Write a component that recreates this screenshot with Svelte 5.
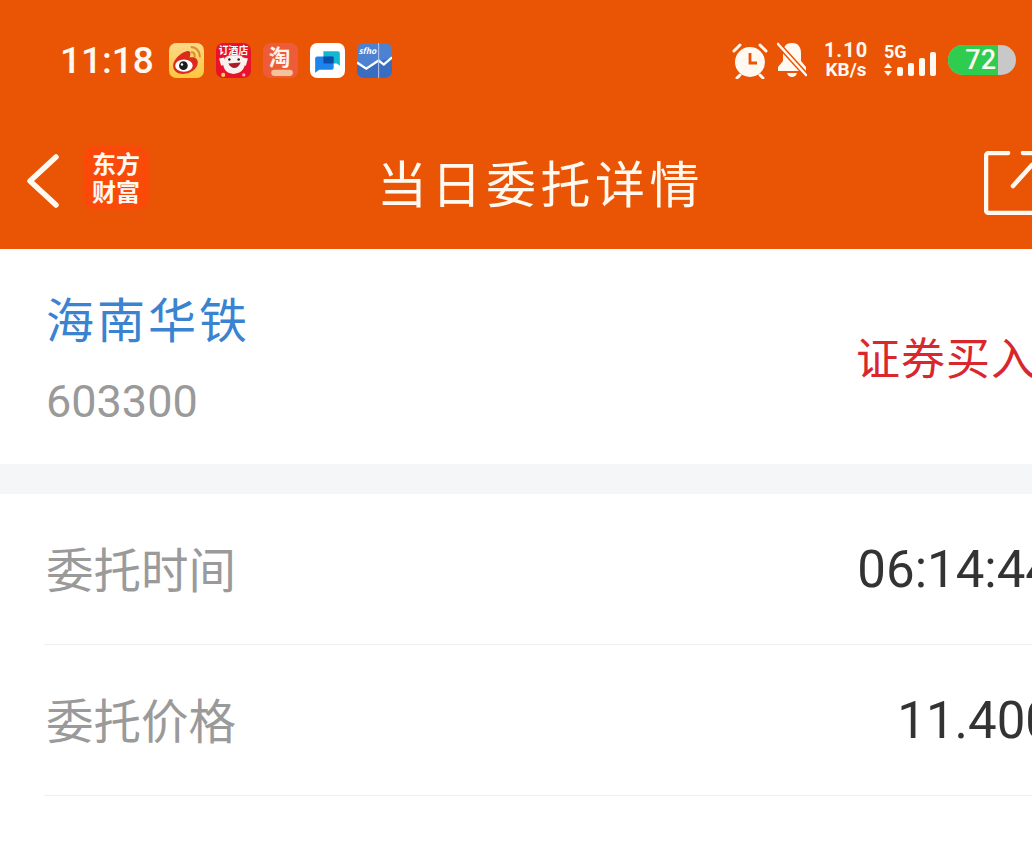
<script lang="ts">
  const rows = [
    { label: '委托时间', value: '06:14:44' },
    { label: '委托价格', value: '11.400' }
  ];
</script>

<div class="page">
  <header class="top">
    <div class="status">
      <div class="status-left">
        <span class="time">11:18</span>
        <div class="apps">
          <svg class="app" viewBox="0 0 34 34">
            <defs>
              <linearGradient id="wb" x1="0" y1="0" x2="0" y2="1">
                <stop offset="0" stop-color="#fbd98a" />
                <stop offset="1" stop-color="#fdc83a" />
              </linearGradient>
            </defs>
            <rect width="34" height="34" rx="7" fill="url(#wb)" />
            <path d="M4 22c0-6 8-13 13-14 3-1 5 1 3 6 5-1 8 1 8 5 0 6-7 11-14 11-6 0-10-3-10-8z" fill="#dc2a1f" />
            <ellipse cx="14.5" cy="22" rx="8.5" ry="6" fill="#fff" />
            <circle cx="14" cy="22" r="4.2" fill="#1c1c1c" />
            <circle cx="12.6" cy="20.8" r="1.2" fill="#fff" />
            <path d="M22 4c4 0 8 4 8 9M22 9c2 0 3 2 3 4" fill="none" stroke="#d98f2a" stroke-width="2" stroke-linecap="round" />
          </svg>
          <svg class="app" viewBox="0 0 34 34">
            <rect width="34" height="34" rx="7" fill="#e9122d" />
            <text x="17" y="11" class="mini-text" font-size="9.5" fill="#fff">订酒店</text>
            <path d="M7 20c0-4 3-8 7-8h8c4 0 6 4 6 8 0 6-5 10-11 10S7 26 7 20z" fill="#fdf1ee" />
            <path d="M3 15l5-1 1 7-4 1zM31 15l-5-1-1 7 4 1z" fill="#fdf1ee" />
            <path d="M12 20c3 6 9 6 12-1z" fill="#a91c30" />
            <circle cx="13" cy="16" r="1.2" fill="#222" />
            <circle cx="22" cy="16" r="1.2" fill="#222" />
            <circle cx="7" cy="31" r="2" fill="#fbd34d" />
            <circle cx="27" cy="31" r="1.6" fill="#f9a8b4" />
          </svg>
          <svg class="app" viewBox="0 0 34 34">
            <rect width="34" height="34" rx="7" fill="#ee5b38" />
            <text x="16" y="21" class="mini-text" font-size="21" fill="#fff2e8">淘</text>
            <rect x="8" y="26" width="21" height="6" rx="3" fill="#f4c39a" />
          </svg>
          <svg class="app" viewBox="0 0 34 34">
            <rect width="34" height="34" rx="7" fill="#fff" />
            <path d="M13 8h14a2 2 0 0 1 2 2v12l-3-2h-13z" fill="#12b8cf" />
            <path d="M7 13h14a2 2 0 0 1 2 2v9a2 2 0 0 1-2 2H9l-4 3V15a2 2 0 0 1 2-2z" fill="#1c84ec" />
            <rect x="13" y="13" width="10" height="7" rx="1" fill="#0d4fa8" />
          </svg>
          <svg class="app" viewBox="0 0 34 34">
            <rect width="34" height="34" rx="7" fill="#4d82d2" />
            <path d="M0 19l9 7 12-9 13-2v12a7 7 0 0 1-7 7H7a7 7 0 0 1-7-7z" fill="#3a6cc0" />
            <path d="M0 19l9 6 12-8 5 4 8-7" fill="none" stroke="#fff" stroke-width="2.2" />
            <path d="M21 0v34" stroke="#b3c9ea" stroke-width="1" />
            <text x="10" y="11" class="mini-text" font-size="8" font-style="italic" fill="#fff">sfho</text>
          </svg>
        </div>
      </div>
      <div class="status-right">
        <svg class="alarm" viewBox="0 0 36 37">
          <circle cx="18" cy="20" r="15" fill="#fff9f2" />
          <path d="M18 11v10h7" fill="none" stroke="#e95504" stroke-width="2.8" />
          <path d="M2 9l6-6M34 9l-6-6M8 33l-3 3M28 33l3 3" stroke="#fff9f2" stroke-width="3" stroke-linecap="round" />
        </svg>
        <svg class="bell" viewBox="0 0 30 36">
          <path d="M15 1C8 1 6 6 6 11v8l-5 6v4h28v-4l-5-6v-8c0-5-2-10-9-10z" fill="#fff9f2" />
          <path d="M10 31c1 3 3 4 5 4s4-1 5-4z" fill="#fff9f2" />
          <path d="M0 1l30 33" stroke="#e95504" stroke-width="5.5" />
          <path d="M1 2l28 31" stroke="#fff9f2" stroke-width="2.6" stroke-linecap="round" />
        </svg>
        <div class="speed">
          <span class="speed-num">1.10</span>
          <span class="speed-unit">KB/s</span>
        </div>
        <div class="signal">
          <span class="net">5G</span>
          <div class="bars">
            <svg class="arrows" viewBox="0 0 8 13">
              <path d="M4 0l4 5H0zM4 13l4-5H0z" fill="#fff9f2" />
            </svg>
            <i class="bar b1"></i>
            <i class="bar b2"></i>
            <i class="bar b3"></i>
            <i class="bar b4"></i>
          </div>
        </div>
        <div class="battery">
          <div class="level" style="width: 74%"></div>
          <span class="battery-num">72</span>
        </div>
      </div>
    </div>
    <div class="nav">
      <svg class="back" viewBox="0 0 34 54">
        <path d="M30 3L4 27l26 24" fill="none" stroke="#fff9f2" stroke-width="5.5" stroke-linecap="round" stroke-linejoin="round" />
      </svg>
      <div class="logo">东方<br />财富</div>
      <h1>当日委托详情</h1>
      <svg class="share" viewBox="0 0 48 64">
        <path d="M24 2H5a3 3 0 0 0-3 3v54a3 3 0 0 0 3 3h43" fill="none" stroke="#fff9f2" stroke-width="4.5" stroke-linecap="round" />
        <path d="M39 2h9M29 35L48 14" fill="none" stroke="#fff9f2" stroke-width="4.5" stroke-linecap="round" />
      </svg>
    </div>
  </header>

  <section class="stock">
    <div class="stock-name">
      <div class="name">海南华铁</div>
      <div class="code">603300</div>
    </div>
    <div class="side">证券买入</div>
  </section>

  <section class="details">
    {#each rows as row}
      <div class="row">
        <span class="label">{row.label}</span>
        <span class="value">{row.value}</span>
      </div>
    {/each}
  </section>
</div>

<style>
  :global(body) {
    margin: 0;
    background: #fff;
    overflow: hidden;
  }

  .page {
    width: 1032px;
    height: 848px;
    overflow: hidden;
    font-family: "Noto Sans CJK SC", "Noto Sans", sans-serif;
  }

  .top {
    height: 249px;
    background: #e95504;
    color: #fff9f2;
  }

  .status {
    height: 128px;
    display: flex;
    justify-content: space-between;
    align-items: flex-start;
    padding: 40px 16px 0 60px;
    box-sizing: border-box;
  }

  .status-left {
    display: flex;
    align-items: center;
    height: 40px;
    gap: 15px;
  }

  .time {
    font-family: Roboto, sans-serif;
    font-size: 37px;
    font-weight: 500;
  }

  .apps {
    display: flex;
    gap: 12px;
  }

  .app {
    width: 35px;
    height: 35px;
    display: block;
  }

  .mini-text {
    font-family: "Noto Sans CJK SC", sans-serif;
    font-weight: 700;
    text-anchor: middle;
  }

  .status-right {
    display: flex;
    align-items: center;
    height: 40px;
  }

  .alarm {
    width: 36px;
    height: 37px;
    margin-right: 9px;
  }

  .bell {
    width: 30px;
    height: 36px;
    margin-right: 18px;
  }

  .speed {
    display: flex;
    flex-direction: column;
    width: 42px;
    align-items: center;
    font-family: Roboto, sans-serif;
    font-weight: 700;
    line-height: 20px;
    margin-right: 17px;
  }

  .speed-num {
    font-size: 20px;
    letter-spacing: 1px;
  }

  .speed-unit {
    font-size: 19px;
  }

  .signal {
    display: flex;
    flex-direction: column;
    width: 54px;
    margin-right: 10px;
  }

  .net {
    font-family: Roboto, sans-serif;
    font-weight: 700;
    font-size: 18px;
    line-height: 15px;
    height: 15px;
  }

  .bars {
    display: flex;
    align-items: flex-end;
    gap: 5px;
    height: 24px;
    margin-top: -7px;
  }

  .arrows {
    width: 8px;
    height: 13px;
  }

  .bar {
    width: 6px;
    background: #fff9f2;
    border-radius: 2px;
  }

  .b1 {
    height: 9px;
  }

  .b2 {
    height: 13px;
  }

  .b3 {
    height: 18px;
  }

  .b4 {
    height: 24px;
  }

  .battery {
    position: relative;
    width: 68px;
    height: 30px;
    border-radius: 15px;
    background: #c8c8c8;
    overflow: hidden;
  }

  .level {
    height: 100%;
    background: #2ecc4f;
  }

  .battery-num {
    position: absolute;
    right: 20px;
    top: 0;
    font-family: Roboto, sans-serif;
    font-weight: 500;
    font-size: 27px;
    line-height: 30px;
  }

  .nav {
    position: relative;
    height: 121px;
    display: flex;
    align-items: center;
    padding-left: 26px;
    box-sizing: border-box;
  }

  .back {
    width: 34px;
    height: 54px;
    margin-top: -15px;
  }

  .logo {
    width: 66px;
    height: 63px;
    margin: -22px 0 0 23px;
    border-radius: 12px;
    background: #fa4a0a;
    font-size: 24px;
    line-height: 28px;
    font-weight: 700;
    text-align: center;
    padding-top: 3px;
    box-sizing: border-box;
  }

  h1 {
    flex: 1;
    margin: -16px 0 0 0;
    padding-left: 228px;
    font-size: 50px;
    font-weight: 400;
    letter-spacing: 4.5px;
    white-space: nowrap;
  }

  .share {
    position: absolute;
    left: 984px;
    top: 23px;
    width: 48px;
    height: 64px;
  }

  .stock {
    display: flex;
    align-items: center;
    justify-content: space-between;
    padding-left: 46px;
    box-sizing: border-box;
    border-bottom: 30px solid #f5f6f8;
    height: 245px;
  }

  .stock-name {
    margin-top: 6px;
  }

  .name {
    font-size: 48px;
    line-height: 60px;
    letter-spacing: 3px;
    color: #3a83d0;
  }

  .code {
    font-family: Roboto, sans-serif;
    font-size: 45px;
    line-height: 60px;
    margin-top: 25px;
    color: #9a9a9a;
  }

  .side {
    font-size: 44px;
    letter-spacing: 1px;
    color: #d8282e;
    white-space: nowrap;
    margin: -2px -4px 0 0;
  }

  .row {
    height: 151px;
    margin-left: 44px;
    display: flex;
    justify-content: space-between;
    align-items: center;
    border-bottom: 1px solid #efefef;
    box-sizing: border-box;
  }

  .label {
    font-size: 47.5px;
    color: #9a9a9a;
    margin: -4px 0 0 2px;
  }

  .value {
    font-family: Roboto, sans-serif;
    font-size: 51px;
    color: #333;
    margin-right: -22px;
    white-space: nowrap;
  }
</style>
